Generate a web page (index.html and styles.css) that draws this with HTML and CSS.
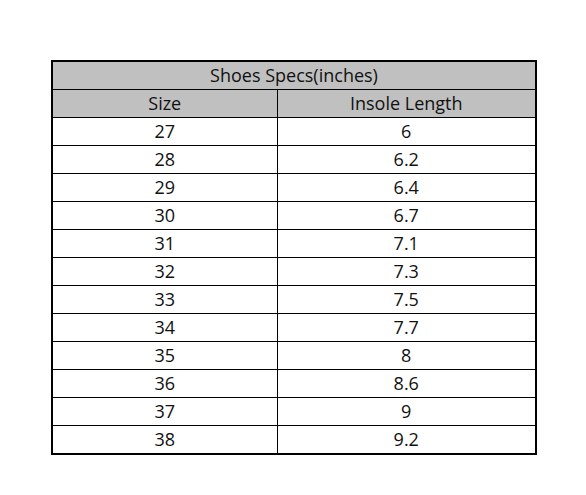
FILE: index.html
```html
<!DOCTYPE html>
<html>
<head>
<meta charset="utf-8">
<link rel="stylesheet" href="styles.css">
</head>
<body>
<table class="specs">
  <colgroup><col class="c1"><col class="c2"></colgroup>
  <tr class="head"><th colspan="2">Shoes Specs(inches)</th></tr>
  <tr class="head"><th>Size</th><th>Insole Length</th></tr>
  <tr><td>27</td><td>6</td></tr>
  <tr><td>28</td><td>6.2</td></tr>
  <tr><td>29</td><td>6.4</td></tr>
  <tr><td>30</td><td>6.7</td></tr>
  <tr><td>31</td><td>7.1</td></tr>
  <tr><td>32</td><td>7.3</td></tr>
  <tr><td>33</td><td>7.5</td></tr>
  <tr><td>34</td><td>7.7</td></tr>
  <tr><td>35</td><td>8</td></tr>
  <tr><td>36</td><td>8.6</td></tr>
  <tr><td>37</td><td>9</td></tr>
  <tr><td>38</td><td>9.2</td></tr>
</table>
</body>
</html>
```
FILE: styles.css
```css
html, body {
  margin: 0;
  padding: 0;
  background: #ffffff;
}
body {
  padding: 60px 0 0 51px;
}
.specs {
  border-collapse: collapse;
  width: 486px;
  border: 2px solid #000;
  font-family: "Open Sans", "Liberation Sans", sans-serif;
  font-size: 18px;
  color: #111;
  table-layout: fixed;
}
.specs .c1 { width: 225px; }
.specs th, .specs td {
  height: 27px;
  padding: 0;
  text-align: center;
  font-weight: normal;
  border: 1px solid #000;
  line-height: 27px;
}
.specs .head th {
  background: #c0c0c0;
}
```
